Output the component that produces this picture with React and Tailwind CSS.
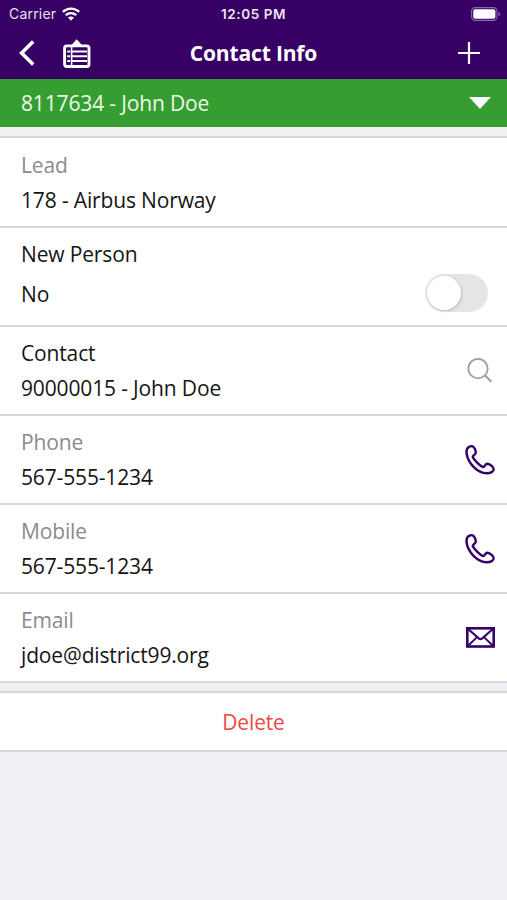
import React from 'react';

function WifiIcon() {
  return (
    <svg width="18" height="14" viewBox="0 0 18 14" fill="none" stroke="#fff" strokeWidth="2.3">
      <path d="M.8 4.900C5.500.500 12.500.500 17.200 4.900" />
      <path d="M3.800 8.200c3-2.800 7.400-2.800 10.400 0" />
      <path d="M6 10.600C7.700 9 10.300 9 12 10.600L9 13.800z" fill="#fff" stroke="none" />
    </svg>
  );
}

function BatteryIcon() {
  return (
    <svg width="30" height="14" viewBox="0 0 30 14">
      <rect x="0.6" y="0.6" width="25.4" height="12.8" rx="3.6" fill="none" stroke="#8a6bab" strokeWidth="1.1" />
      <rect x="2.2" y="2.2" width="22.2" height="9.6" rx="2" fill="#fff" />
      <path d="M27.6 4.8c2.2.8 2.2 3.6 0 4.4z" fill="#8a6bab" />
    </svg>
  );
}

function BackIcon() {
  return (
    <svg width="16" height="26" viewBox="0 0 16 26" fill="none" stroke="#fff" strokeWidth="3.6">
      <path d="M14.2 1.4L2.6 13l11.6 11.6" />
    </svg>
  );
}

function ListIcon() {
  return (
    <svg width="28" height="29" viewBox="0 0 28 29" fill="none" stroke="#fff">
      <path d="M8 6.500L13.700.300l5.700 6.200z" fill="#fff" stroke="none" />
      <rect x="1.600" y="6.900" width="24.400" height="20.600" rx="2.200" strokeWidth="2.900" />
      <path d="M8.600 8v19" strokeWidth="1.600" />
      <path d="M4.200 12.500h3M4.200 17.200h3M4.200 22h3" strokeWidth="1.900" />
      <path d="M9 12.500h15M9 17.200h15M9 22h15" strokeWidth="1.900" />
    </svg>
  );
}

function SearchIcon() {
  return (
    <svg width="26" height="26" viewBox="0 0 26 26" fill="none" stroke="#a0a0a0" strokeWidth="1.8">
      <circle cx="11" cy="10.6" r="9.7" />
      <path d="M17.800 17.300l6.500 6.500" strokeWidth="2.200" />
    </svg>
  );
}

function PhoneIcon() {
  return (
    <svg width="30" height="30" viewBox="0 0 30 30" fill="none" stroke="#360068" strokeWidth="2.4" strokeLinejoin="round">
      <path d="M4.500 1.700C2.200 2.700 1.200 5.500 1.600 8.800C3.200 18.500 12.500 28.100 21.800 28.300C25.800 28.300 28.700 26.500 28.700 24.300C28.600 22.300 25.300 19.200 22.300 18.800C20.200 18.700 19.800 21.900 18.300 22C15.500 21.500 8.800 14.700 7.700 12C7.500 10.400 10.700 9.600 10.800 7.800C10.900 5.600 9.300 1.500 7.200 1.200C6.300 1.100 5.300 1.300 4.500 1.700Z" />
    </svg>
  );
}

function MailIcon() {
  return (
    <svg width="29" height="21" viewBox="0 0 29 21" fill="none" stroke="#360068">
      <rect x="1.300" y="1.300" width="26.400" height="18.200" strokeWidth="2.600" />
      <path d="M1.800 1.800l11 9.600q1.700 1.300 3.400 0l11-9.600" strokeWidth="2.100" />
      <path d="M1.800 19l9-8.600M27.200 19l-9-8.600" strokeWidth="1.900" />
    </svg>
  );
}

function Row({ label, value, muted, icon }) {
  return (
    <div className="flex h-[89px] items-center justify-between border-b-2 border-[#d7d7da] bg-white pl-[21px] pr-3">
      <div className="leading-[34.500px]">
        <div className={muted ? 'text-[#8b8b8b]' : 'text-[#151515]'}>{label}</div>
        <div className="text-[#151515]">{value}</div>
      </div>
      {icon}
    </div>
  );
}

export default function App() {
  return (
    <div className="flex h-[900px] w-[507px] flex-col overflow-hidden bg-[#efeff4] font-['Open_Sans','Noto_Sans',sans-serif] text-[21px] tracking-[-0.15px]">
      <header className="h-[79px] bg-[#360064] text-white">
        <div className="grid h-7 grid-cols-3 items-center pl-[9px] pr-[6px] font-['Inter',sans-serif] text-[14px] leading-7">
          <div className="flex items-center gap-[6px]">
            <span className="tracking-[0.2px] text-[#e9e0f0]">Carrier</span>
            <WifiIcon />
          </div>
          <div className="-ml-[3px] text-center text-[13.500px] font-semibold tracking-[0.6px] text-[#eee6f4]">12:05 PM</div>
          <div className="flex justify-end"><BatteryIcon /></div>
        </div>
        <div className="grid h-[50px] grid-cols-[1fr_auto_1fr] items-center">
          <div className="flex items-center gap-7 pl-[19px]">
            <BackIcon />
            <ListIcon />
          </div>
          <h1 className="pt-[2px] font-bold">Contact Info</h1>
          <svg className="mr-[27px] justify-self-end" width="22" height="22" viewBox="0 0 22 22" stroke="#fff" strokeWidth="2.200">
            <path d="M11 0v22M0 11h22" />
          </svg>
        </div>
      </header>
      <div className="flex h-12 items-center justify-between bg-[#369d30] pl-[21px] pr-4 text-[#edf8ec]">
        <span className="pt-[2px]">8117634 - John Doe</span>
        <svg width="22" height="12" viewBox="0 0 22 12" fill="#fff"><path d="M0 0h22L11 12z" /></svg>
      </div>
      <main className="mt-[9px] border-t-2 border-[#d7d7da]">
        <div className="bg-white pt-px">
          <Row label="Lead" value="178 - Airbus Norway" muted />
        </div>
        <div className="h-[99px] border-b-2 border-[#d7d7da] bg-white pl-[21px] pr-[19px] pt-[9px] text-[#151515]">
          <div className="leading-[34px]">New Person</div>
          <div className="flex h-[43px] items-center justify-between">
            <span className="pt-1">No</span>
            <div className="flex h-[38px] w-[63px] items-center rounded-full bg-[#e5e5e8] p-[2px]">
              <div className="size-[34px] rounded-full bg-white shadow-[1px_1px_3px_rgba(0,0,0,0.18)]" />
            </div>
          </div>
        </div>
        <Row label="Contact" value="90000015 - John Doe" icon={<span className="mr-[2px]"><SearchIcon /></span>} />
        <Row label="Phone" value="567-555-1234" muted icon={<PhoneIcon />} />
        <Row label="Mobile" value="567-555-1234" muted icon={<PhoneIcon />} />
        <Row label="Email" value="jdoe@district99.org" muted icon={<MailIcon />} />
      </main>
      <button className="mt-2 flex h-[61px] items-center justify-center border-y-2 border-[#d7d7da] bg-white pt-[2px] text-[#f0483e]">Delete</button>
    </div>
  );
}
